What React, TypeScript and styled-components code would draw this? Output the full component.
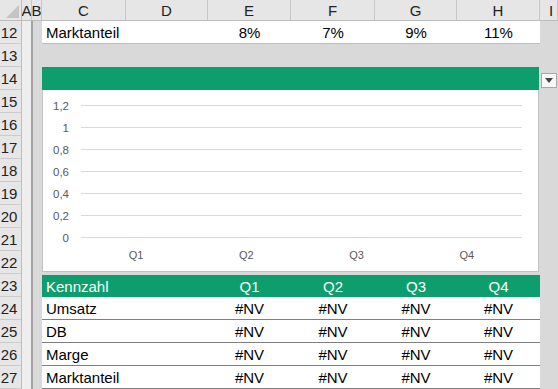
import React from "react";
import styled, { createGlobalStyle } from "styled-components";

const GREEN = "#0e9e6d";
const SHEET_BG = "#d9d9d9";

const columns = [
  { name: "A", width: 10 },
  { name: "B", width: 10 },
  { name: "C", width: 84 },
  { name: "D", width: 82 },
  { name: "E", width: 83 },
  { name: "F", width: 84 },
  { name: "G", width: 82 },
  { name: "H", width: 83 },
];

const rowNumbers = Array.from({ length: 16 }, (_, i) => 12 + i);

const quarters = ["Q1", "Q2", "Q3", "Q4"];
const shareRow = ["8%", "7%", "9%", "11%"];
const kpis = ["Umsatz", "DB", "Marge", "Marktanteil"];
const yTicks = ["1,2", "1", "0,8", "0,6", "0,4", "0,2", "0"];

export default function App() {
  return (
    <>
      <GlobalStyle />
      <Sheet>
        <HeaderRow>
          <Corner />
          {columns.map(col => (
            <ColHead key={col.name} $width={col.width}>
              {col.name}
            </ColHead>
          ))}
          <ColHead $grow>I</ColHead>
        </HeaderRow>

        <Body>
          <RowNumbers>
            {rowNumbers.map(n => (
              <RowNum key={n}>{n}</RowNum>
            ))}
          </RowNumbers>
          <ColA />
          <ColB />

          <Content>
            <Row12>
              <Cell $align="left">Marktanteil</Cell>
              <Cell />
              {shareRow.map(v => (
                <Cell key={v}>{v}</Cell>
              ))}
            </Row12>
            <Spacer />

            <Chart>
              <ChartTitle />
              <ChartBody>
                <PlotArea />
              </ChartBody>
            </Chart>

            <TableHead>
              <Cell $align="left">Kennzahl</Cell>
              <Cell />
              {quarters.map(q => (
                <Cell key={q}>{q}</Cell>
              ))}
            </TableHead>
            {kpis.map(k => (
              <TableRow key={k}>
                <Cell $align="left">{k}</Cell>
                <Cell />
                {quarters.map(q => (
                  <Cell key={q}>#NV</Cell>
                ))}
              </TableRow>
            ))}
          </Content>

          <Gutter>
            <FilterButton>
              <svg width="8" height="5" viewBox="0 0 8 5">
                <path d="M0 0 H8 L4 5 Z" fill="#444" />
              </svg>
            </FilterButton>
          </Gutter>
        </Body>
      </Sheet>
    </>
  );
}

function PlotArea() {
  const left = 38;
  const right = 479;
  const top = 15;
  const step = 22;
  const band = (right - left) / quarters.length;
  return (
    <svg width="495" height="181" viewBox="0 0 495 181">
      {yTicks.map((t, i) => {
        const y = top + i * step + 0.5;
        return (
          <g key={t}>
            <line x1={left} x2={right} y1={y} y2={y} stroke="#d9d9d9" strokeWidth="1" />
            <text
              x={26}
              y={y + 4}
              textAnchor="end"
              fontSize="11.5"
              fill="#595959"
              fontFamily="Liberation Sans, Arial, sans-serif"
            >
              {t}
            </text>
          </g>
        );
      })}
      {quarters.map((q, i) => (
        <text
          key={q}
          x={left + band * i + band / 2}
          y={169}
          textAnchor="middle"
          fontSize="11"
          fill="#595959"
          fontFamily="Liberation Sans, Arial, sans-serif"
        >
          {q}
        </text>
      ))}
    </svg>
  );
}

const GlobalStyle = createGlobalStyle`
  html, body {
    margin: 0;
    padding: 0;
    background: ${SHEET_BG};
    overflow: hidden;
  }
  body {
    font-family: "Liberation Sans", Arial, sans-serif;
    font-size: 15px;
    color: #000;
  }
`;

const Sheet = styled.div`
  width: 558px;
  height: 389px;
  display: flex;
  flex-direction: column;
  background: ${SHEET_BG};
  overflow: hidden;
`;

const HeaderRow = styled.div`
  display: flex;
  height: 21px;
  flex: none;
  background: #e6e6e6;
  border-bottom: 1px solid #bdbdbd;
  box-sizing: border-box;
`;

const Corner = styled.div`
  position: relative;
  width: 22px;
  flex: none;
  border-right: 1px solid #bdbdbd;
  box-sizing: border-box;

  &::after {
    content: "";
    position: absolute;
    right: 2px;
    bottom: 2px;
    border-left: 13px solid transparent;
    border-bottom: 13px solid #c4c4c4;
  }
`;

const ColHead = styled.div<{ $width?: number; $grow?: boolean }>`
  width: ${p => (p.$width ? `${p.$width}px` : "auto")};
  flex: ${p => (p.$grow ? "1" : "none")};
  display: flex;
  align-items: center;
  justify-content: ${p => (p.$grow ? "flex-start" : "center")};
  padding-left: ${p => (p.$grow ? "9px" : "0")};
  border-right: 1px solid #c6c6c6;
  box-sizing: border-box;
  color: #222;
  font-size: 15px;
  overflow: hidden;
`;

const Body = styled.div`
  display: flex;
  flex: 1;
  min-height: 0;
`;

const RowNumbers = styled.div`
  width: 22px;
  flex: none;
  background: #e6e6e6;
  border-right: 1px solid #bdbdbd;
  box-sizing: border-box;
`;

const RowNum = styled.div`
  height: 23px;
  display: flex;
  align-items: center;
  justify-content: center;
  padding-right: 3px;
  border-bottom: 1px solid #cbcbcb;
  box-sizing: border-box;
  color: #222;
  font-size: 15px;
`;

const ColA = styled.div`
  width: 9px;
  flex: none;
  background: #eeeeee;
  border-right: 2px solid #a3a3a3;
`;

const ColB = styled.div`
  width: 9px;
  flex: none;
  background: ${SHEET_BG};
`;

const Content = styled.div`
  width: 498px;
  flex: none;
  display: flex;
  flex-direction: column;
`;

const Cell = styled.div<{ $align?: "left" | "center" }>`
  display: flex;
  align-items: center;
  justify-content: ${p => (p.$align === "left" ? "flex-start" : "center")};
  padding-left: ${p => (p.$align === "left" ? "4px" : "0")};
  white-space: nowrap;
  overflow: hidden;
`;

const gridColumns = "84px 82px 83px 84px 82px 83px";

const Row12 = styled.div`
  display: grid;
  grid-template-columns: ${gridColumns};
  height: 23px;
  background: #fff;
  border-bottom: 1px solid #bdbdbd;
  box-sizing: border-box;
`;

const Spacer = styled.div`
  height: 23px;
`;

const Chart = styled.div`
  width: 497px;
  height: 205px;
  margin-bottom: 2px;
  display: flex;
  flex-direction: column;
  background: #fff;
  border: 1px solid #c3c3c3;
  border-top: none;
  box-sizing: border-box;
`;

const ChartTitle = styled.div`
  height: 23px;
  flex: none;
  margin: 0 -1px;
  background: ${GREEN};
`;

const ChartBody = styled.div`
  flex: 1;
  display: flex;
`;

const TableHead = styled.div`
  display: grid;
  grid-template-columns: ${gridColumns};
  height: 23px;
  background: ${GREEN};
  color: #fff;
  border-top: 1px solid #d6d6d6;
  box-sizing: border-box;
`;

const TableRow = styled.div`
  display: grid;
  grid-template-columns: ${gridColumns};
  height: 23px;
  background: #fff;
  border-bottom: 1px solid #7f7f7f;
  box-sizing: border-box;
`;

const Gutter = styled.div`
  position: relative;
  flex: 1;
  background: ${SHEET_BG};
`;

const FilterButton = styled.div`
  position: absolute;
  top: 52px;
  left: 1px;
  width: 16px;
  height: 15px;
  display: flex;
  align-items: center;
  justify-content: center;
  background: #f7f7f7;
  border: 1px solid #a8a8a8;
  box-sizing: border-box;
`;
